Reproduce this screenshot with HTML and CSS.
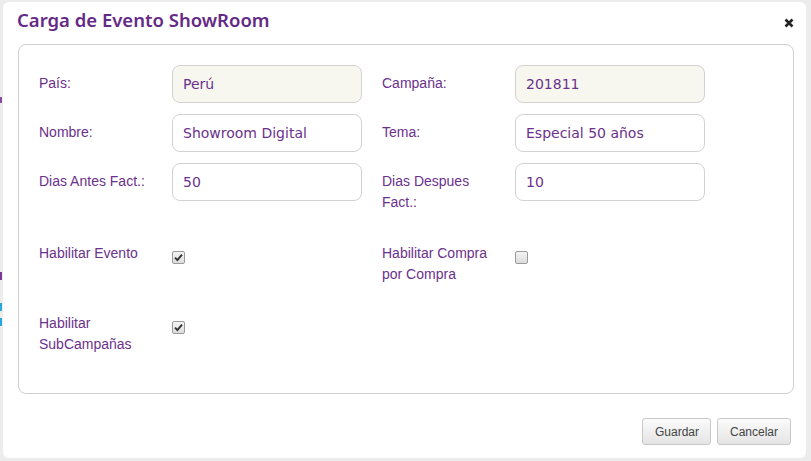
FILE: index.html
```html
<!DOCTYPE html>
<html lang="es">
<head>
<meta charset="utf-8">
<title>Carga de Evento ShowRoom</title>
<link rel="stylesheet" href="styles.css">
</head>
<body>
<div class="page-bits">
  <span class="bit bit-purple1"></span>
  <span class="bit bit-purple2"></span>
  <span class="bit bit-blue1"></span>
  <span class="bit bit-blue2"></span>
</div>
<div class="modal">
  <div class="modal-header">
    <h1 class="modal-title">Carga de Evento ShowRoom</h1>
    <span class="close" aria-label="Cerrar">
      <svg width="10" height="10" viewBox="0 0 10 10"><path d="M1.5 1.5 L8.5 8.5 M8.5 1.5 L1.5 8.5" stroke="#222" stroke-width="2.6" stroke-linecap="butt"/></svg>
    </span>
  </div>
  <div class="modal-body">
    <div class="fieldset">
      <div class="row">
        <div class="col">
          <label class="lbl">País:</label>
          <div class="ctl"><div class="input readonly">Perú</div></div>
        </div>
        <div class="col">
          <label class="lbl">Campaña:</label>
          <div class="ctl"><div class="input readonly">201811</div></div>
        </div>
      </div>
      <div class="row">
        <div class="col">
          <label class="lbl">Nombre:</label>
          <div class="ctl"><div class="input">Showroom Digital</div></div>
        </div>
        <div class="col">
          <label class="lbl">Tema:</label>
          <div class="ctl"><div class="input">Especial 50 años</div></div>
        </div>
      </div>
      <div class="row">
        <div class="col">
          <label class="lbl">Dias Antes Fact.:</label>
          <div class="ctl"><div class="input">50</div></div>
        </div>
        <div class="col">
          <label class="lbl">Dias Despues Fact.:</label>
          <div class="ctl"><div class="input">10</div></div>
        </div>
      </div>
      <div class="row row-check">
        <div class="col">
          <label class="lbl lbl-check">Habilitar Evento</label>
          <div class="ctl"><span class="cb checked"><svg width="9" height="9" viewBox="0 0 9 9"><path d="M1 4.6 L3.4 7 L8 1.6" fill="none" stroke="#333" stroke-width="1.9"/></svg></span></div>
        </div>
        <div class="col">
          <label class="lbl lbl-check">Habilitar Compra por Compra</label>
          <div class="ctl"><span class="cb"></span></div>
        </div>
      </div>
      <div class="row row-check row-last">
        <div class="col">
          <label class="lbl lbl-check">Habilitar SubCampañas</label>
          <div class="ctl"><span class="cb checked"><svg width="9" height="9" viewBox="0 0 9 9"><path d="M1 4.6 L3.4 7 L8 1.6" fill="none" stroke="#333" stroke-width="1.9"/></svg></span></div>
        </div>
      </div>
    </div>
  </div>
  <div class="modal-footer">
    <button class="btn">Guardar</button>
    <button class="btn">Cancelar</button>
  </div>
</div>
</body>
</html>
```
FILE: styles.css
```css
html, body {
  margin: 0;
  padding: 0;
}
body {
  background: #ececec;
  width: 811px;
  height: 461px;
  overflow: hidden;
  position: relative;
  font-family: "Liberation Sans", Arial, sans-serif;
}
.page-bits .bit {
  position: absolute;
  left: 0;
  width: 2px;
}
.bit-purple1 { top: 97px; height: 6px; background: #8a4a9e; }
.bit-purple2 { top: 272px; height: 8px; background: #7a3a92; }
.bit-blue1 { top: 303px; height: 8px; background: #2aa6e0; }
.bit-blue2 { top: 318px; height: 8px; background: #2aa6e0; }

.modal {
  position: relative;
  margin: 2px 0 0 3px;
  width: 803px;
  height: 456px;
  background: #fff;
  border-radius: 6px;
  display: flex;
  flex-direction: column;
}
.modal-header {
  height: 42px;
  display: flex;
  align-items: flex-start;
  justify-content: space-between;
  padding: 0 12px 0 14px;
  box-sizing: border-box;
}
.modal-title {
  margin: 5px 0 0 0;
  font-family: "Noto Sans", sans-serif;
  font-weight: 600;
  font-size: 18.5px;
  line-height: 26px;
  color: #652a86;
}
.close {
  margin-top: 16px;
  width: 10px;
  height: 10px;
  display: block;
}
.close svg { display: block; }

.modal-body {
  padding: 0 0 0 15px;
}
.fieldset {
  width: 776px;
  box-sizing: border-box;
  border: 1px solid #cfcfcf;
  border-radius: 8px;
  padding: 20px 0 38px 20px;
}
.row {
  display: flex;
  height: 38px;
  margin-bottom: 11px;
}
.col {
  display: flex;
  width: 343px;
}
.lbl {
  width: 133px;
  flex: none;
  font-size: 14px;
  line-height: 21px;
  color: #6b318c;
  padding: 8px 15px 0 0;
  box-sizing: border-box;
}
.lbl-check {
  padding-top: 0;
}
.ctl {
  width: 190px;
  flex: none;
}
.input {
  height: 38px;
  box-sizing: border-box;
  border: 1px solid #d2d2d2;
  border-radius: 8px;
  padding: 0 10px;
  font-family: "DejaVu Sans", Verdana, sans-serif;
  font-size: 14px;
  line-height: 36px;
  color: #6b318c;
  background: #fff;
}
.input.readonly {
  background: #f7f7ef;
}
.row-check {
  height: 42px;
  margin-bottom: 0;
}
.row:nth-child(4) {
  margin-top: 42px;
}
.row-last {
  margin-top: 28px;
}
.cb {
  display: flex;
  align-items: center;
  justify-content: center;
  margin-top: 8px;
  width: 13px;
  height: 13px;
  box-sizing: border-box;
  border: 1px solid #9a9a9a;
  border-radius: 2px;
  background: linear-gradient(#f4f4f4, #dcdcdc);
}
.cb svg { display: block; }

.modal-footer {
  flex: 1;
  display: flex;
  justify-content: flex-end;
  align-items: flex-start;
  gap: 6px;
  padding: 24px 15px 0 0;
}
.btn {
  height: 27px;
  padding: 0 12px;
  border: 1px solid #c8c8c8;
  border-radius: 3px;
  background: linear-gradient(#fbfbfb, #e4e4e4);
  font-family: "Liberation Sans", Arial, sans-serif;
  font-size: 12px;
  color: #444;
}
.btn:first-child { width: 69px; }
.btn:last-child { width: 74px; }
```
